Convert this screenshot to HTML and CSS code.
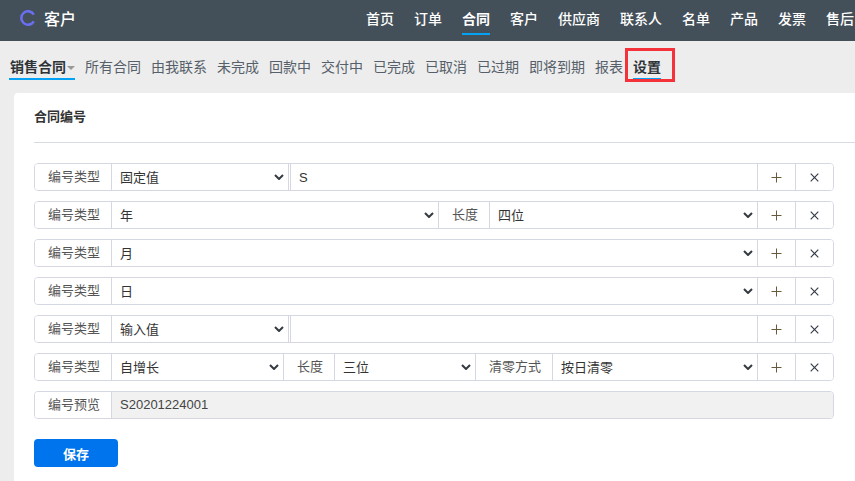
FILE: index.html
```html
<!DOCTYPE html>
<html lang="zh-CN">
<head>
<meta charset="utf-8">
<title>合同设置</title>
<link rel="stylesheet" href="styles.css">
</head>
<body>
<svg class="defs" width="0" height="0" aria-hidden="true">
  <symbol id="plus" viewBox="0 0 11 11"><path d="M5.5 0.5V10.5M0.5 5.5H10.5" fill="none" stroke="#6a5a3c" stroke-width="1"/></symbol>
  <symbol id="times" viewBox="0 0 9 9"><path d="M0.7 0.7L8.3 8.3M8.3 0.7L0.7 8.3" fill="none" stroke="#343c45" stroke-width="1.15"/></symbol>
</svg>
<header class="topbar">
  <div class="brand">
    <svg class="logo" width="16" height="16" viewBox="0 0 16 16"><path d="M13.8 4.6A6.7 6.7 0 1 0 13.8 11.4" fill="none" stroke="#6a6ff0" stroke-width="2.6"/></svg>
    <span>客户</span>
  </div>
  <nav class="mainnav">
    <a>首页</a><a>订单</a><a class="on">合同</a><a>客户</a><a>供应商</a><a>联系人</a><a>名单</a><a>产品</a><a>发票</a><a>售后</a>
  </nav>
</header>
<nav class="subnav">
  <a class="active first">销售合同<i class="caret"></i></a>
  <a>所有合同</a><a>由我联系</a><a>未完成</a><a>回款中</a><a>交付中</a><a>已完成</a><a>已取消</a><a>已过期</a><a>即将到期</a><a>报表</a>
  <a class="active marked">设置</a>
</nav>
<main class="card">
  <h2 class="title">合同编号</h2>
  <div class="rows">
    <div class="row">
      <span class="lbl">编号类型</span>
      <select class="w-a edge"><option>固定值</option></select>
      <input class="txt" value="S">
      <button class="act"><svg class="ic-plus"><use href="#plus"/></svg></button><button class="act"><svg class="ic-times"><use href="#times"/></svg></button>
    </div>
    <div class="row">
      <span class="lbl">编号类型</span>
      <select class="w-b"><option>年</option></select>
      <span class="lbl">长度</span>
      <select class="fill"><option>四位</option></select>
      <button class="act"><svg class="ic-plus"><use href="#plus"/></svg></button><button class="act"><svg class="ic-times"><use href="#times"/></svg></button>
    </div>
    <div class="row">
      <span class="lbl">编号类型</span>
      <select class="fill"><option>月</option></select>
      <button class="act"><svg class="ic-plus"><use href="#plus"/></svg></button><button class="act"><svg class="ic-times"><use href="#times"/></svg></button>
    </div>
    <div class="row">
      <span class="lbl">编号类型</span>
      <select class="fill"><option>日</option></select>
      <button class="act"><svg class="ic-plus"><use href="#plus"/></svg></button><button class="act"><svg class="ic-times"><use href="#times"/></svg></button>
    </div>
    <div class="row">
      <span class="lbl">编号类型</span>
      <select class="w-a edge"><option>输入值</option></select>
      <input class="txt" value="">
      <button class="act"><svg class="ic-plus"><use href="#plus"/></svg></button><button class="act"><svg class="ic-times"><use href="#times"/></svg></button>
    </div>
    <div class="row">
      <span class="lbl">编号类型</span>
      <select class="w-c"><option>自增长</option></select>
      <span class="lbl">长度</span>
      <select class="w-d"><option>三位</option></select>
      <span class="lbl">清零方式</span>
      <select class="fill"><option>按日清零</option></select>
      <button class="act"><svg class="ic-plus"><use href="#plus"/></svg></button><button class="act"><svg class="ic-times"><use href="#times"/></svg></button>
    </div>
    <div class="row">
      <span class="lbl">编号预览</span>
      <div class="preview">S20201224001</div>
    </div>
  </div>
  <button class="save">保存</button>
</main>
</body>
</html>
```
FILE: styles.css
```css
* { box-sizing: border-box; }
html, body { height: 100%; }
body {
  margin: 0;
  height: 481px;
  overflow: hidden;
  background: #ededed;
  font-family: "Liberation Sans", "Noto Sans CJK SC", sans-serif;
  font-size: 13px;
  color: #333;
  display: flex;
  flex-direction: column;
}
.defs { position: absolute; }
.topbar {
  height: 41px;
  flex: none;
  background: #434f59;
  display: flex;
  justify-content: space-between;
  padding-left: 20px;
  white-space: nowrap;
}
.brand {
  display: flex;
  align-items: center;
  gap: 8px;
  color: #fff;
  font-size: 16px;
  font-weight: 500;
  padding-bottom: 5px;
}
.logo { display: block; }
.mainnav { display: flex; gap: 20px; margin-right: 1px; }
.mainnav a {
  height: 35px;
  line-height: 38px;
  color: #fff;
  font-size: 14px;
  font-weight: 500;
  border-bottom: 2px solid transparent;
}
.mainnav a.on { font-weight: 700; border-bottom-color: #04a2f5; }
.subnav {
  height: 52px;
  flex: none;
  padding: 7px 0 0 9px;
  display: flex;
  gap: 10px;
  align-items: flex-start;
}
.subnav a {
  height: 32px;
  line-height: 38px;
  font-size: 14px;
  color: #56606a;
  border-bottom: 2px solid transparent;
  white-space: nowrap;
  position: relative;
}
.subnav a.active { font-weight: 700; color: #2e3338; border-bottom-color: #04a2f5; }
.subnav a.first { padding-left: 1px; }
.caret {
  display: inline-block;
  margin-left: 1px;
  vertical-align: 2px;
  border-left: 4px solid transparent;
  border-right: 4px solid transparent;
  border-top: 4px solid #999;
}
.subnav a.marked::after {
  content: "";
  box-sizing: border-box;
  position: absolute;
  left: -8px;
  top: 0;
  width: 50px;
  height: 34px;
  border: 3px solid #f5323a;
}
.card {
  flex: 1;
  margin-left: 14px;
  background: #fff;
  border-radius: 4px 0 0 0;
  padding: 0 21px 0 20px;
}
.title {
  margin: 0 -21px 0 0;
  height: 50px;
  line-height: 48px;
  font-size: 13px;
  font-weight: 700;
  color: #333;
  border-bottom: 1px solid #d8dbe3;
}
.rows {
  margin-top: 20px;
  display: flex;
  flex-direction: column;
  gap: 10px;
}
.row {
  display: flex;
  height: 28px;
  border: 1px solid #d5d8e2;
  border-radius: 4px;
  overflow: hidden;
}
.lbl {
  flex: none;
  padding: 0 11px 0 13px;
  line-height: 25px;
  color: #555;
  border-right: 1px solid #d5d8e2;
  white-space: nowrap;
  font-size: 13px;
  background: #fff;
}
select + .lbl { border-left: 1px solid #d5d8e2; }
select {
  appearance: none;
  border: 0;
  background-color: #fff;
  background-image: url("data:image/svg+xml,%3Csvg xmlns='http://www.w3.org/2000/svg' width='10' height='6' viewBox='0 0 10 6'%3E%3Cpath d='M1 1L5 5L9 1' fill='none' stroke='%23343a40' stroke-width='2'/%3E%3C/svg%3E");
  background-repeat: no-repeat;
  background-position: right 4px center;
  height: 26px;
  padding: 0 18px 0 8px;
  font: inherit;
  color: #333;
  outline: 0;
  min-width: 0;
  flex: none;
}
.fill { flex: 1; }
.w-a { width: 177px; }
.w-b { width: 326px; }
.w-c { width: 171px; }
.w-d { width: 140px; }
.edge { border-right: 1px solid #d5d8e2; }
.txt {
  flex: 1;
  min-width: 0;
  border: 0;
  border-left: 1px solid #d5d8e2;
  margin-left: 1px;
  height: 26px;
  padding: 0 8px;
  font: inherit;
  color: #333;
  outline: 0;
}
.act {
  flex: none;
  width: 38px;
  height: 26px;
  padding: 0;
  border: 0;
  border-left: 1px solid #d5d8e2;
  background: #fff;
  display: flex;
  align-items: center;
  justify-content: center;
}
.ic-plus { width: 11px; height: 11px; display: block; }
.ic-times { width: 9px; height: 9px; display: block; }
.preview {
  flex: 1;
  background: #f1f1f1;
  line-height: 26px;
  padding-left: 8px;
  color: #444;
}
.save {
  display: block;
  margin-top: 20px;
  width: 84px;
  height: 28px;
  border: 0;
  border-radius: 4px;
  background: #0074ec;
  color: #fff;
  font: inherit;
  font-weight: 700;
}
```
